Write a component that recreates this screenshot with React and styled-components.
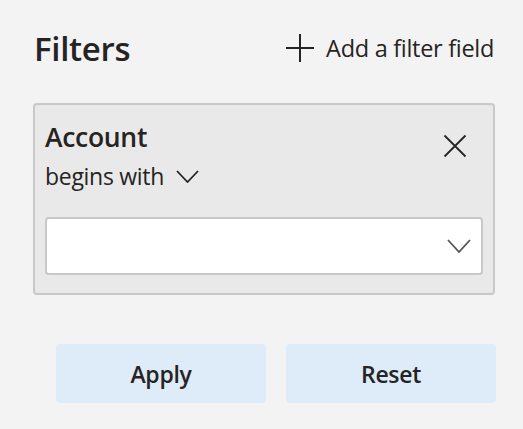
import React from "react";
import styled, { createGlobalStyle } from "styled-components";

const Global = createGlobalStyle`
  html, body { margin: 0; padding: 0; background: #f3f3f3; }
  body { font-family: "Open Sans", "Noto Sans", sans-serif; color: #252423; }
`;

const Page = styled.div`
  width: 523px;
  height: 429px;
  background: #f3f3f3;
  box-sizing: border-box;
  padding: 24px 28px 0 33px;
  display: flex;
  flex-direction: column;
`;

const Header = styled.div`
  display: flex;
  align-items: center;
  justify-content: space-between;
  height: 48px;
  padding-left: 1px;
  padding-right: 1px;
`;

const Title = styled.h1`
  margin: 0;
  font-size: 33px;
  font-weight: 600;
  letter-spacing: -0.3px;
  line-height: 1;
`;

const AddButton = styled.button`
  display: flex;
  align-items: center;
  gap: 11px;
  border: none;
  background: none;
  padding: 0;
  font-family: inherit;
  font-size: 23.5px;
  color: #252423;
  letter-spacing: -0.3px;
  cursor: pointer;
`;

const Card = styled.div`
  margin-top: 31px;
  border: 2px solid #c8c8c8;
  border-radius: 4px;
  background: #e9e9e9;
  padding: 14px 10px 18px 10px;
  display: flex;
  flex-direction: column;
`;

const CardHead = styled.div`
  display: flex;
  justify-content: space-between;
  align-items: flex-start;
`;

const FieldName = styled.div`
  font-size: 26.5px;
  font-weight: 600;
  line-height: 36px;
  letter-spacing: -0.3px;
`;

const CloseButton = styled.button`
  border: none;
  background: none;
  padding: 0;
  margin: 15px 16px 0 0;
  width: 24px;
  height: 24px;
  display: flex;
  align-items: center;
  justify-content: center;
  cursor: pointer;
`;

const Operator = styled.button`
  display: flex;
  align-items: center;
  gap: 12px;
  border: none;
  background: none;
  padding: 0;
  margin-top: 5px;
  font-family: inherit;
  font-size: 23px;
  line-height: 32px;
  letter-spacing: -0.3px;
  color: #252423;
  cursor: pointer;
`;

const Select = styled.div`
  margin-top: 25px;
  height: 58px;
  box-sizing: border-box;
  background: #fff;
  border: 2px solid #c8c8c8;
  border-radius: 4px;
  display: flex;
  align-items: center;
  justify-content: flex-end;
  padding-right: 10px;
`;

const Actions = styled.div`
  display: grid;
  grid-template-columns: 1fr 1fr;
  gap: 20px;
  margin: 49px -1px 0 23px;
`;

const ActionButton = styled.button`
  height: 59px;
  border: none;
  border-radius: 4px;
  background: #deebf8;
  font-family: inherit;
  font-size: 23px;
  font-weight: 600;
  letter-spacing: -0.3px;
  color: #252423;
  cursor: pointer;
`;

const PlusIcon = () => (
  <svg width="30" height="28" viewBox="0 0 30 28">
    <path d="M15 0 V28 M1 14 H29" stroke="#252423" strokeWidth="2" fill="none" />
  </svg>
);

const XIcon = () => (
  <svg width="24" height="24" viewBox="0 0 24 24">
    <path d="M1.5 1.5 L22.5 22.5 M22.5 1.5 L1.5 22.5" stroke="#252423" strokeWidth="1.8" fill="none" />
  </svg>
);

const Chevron = ({ w, h, color }) => (
  <svg width={w} height={h} viewBox={`0 0 ${w} ${h}`}>
    <path d={`M1 1 L${w / 2} ${h - 1} L${w - 1} 1`} stroke={color} strokeWidth="1.8" fill="none" />
  </svg>
);

export default function App() {
  return (
    <>
      <Global />
      <Page>
        <Header>
          <Title>Filters</Title>
          <AddButton>
            <PlusIcon />
            Add a filter field
          </AddButton>
        </Header>
        <Card>
          <CardHead>
            <div>
              <FieldName>Account</FieldName>
              <Operator>
                begins with
                <Chevron w={23} h={13} color="#252423" />
              </Operator>
            </div>
            <CloseButton>
              <XIcon />
            </CloseButton>
          </CardHead>
          <Select>
            <Chevron w={24} h={14} color="#555" />
          </Select>
        </Card>
        <Actions>
          <ActionButton>Apply</ActionButton>
          <ActionButton>Reset</ActionButton>
        </Actions>
      </Page>
    </>
  );
}
